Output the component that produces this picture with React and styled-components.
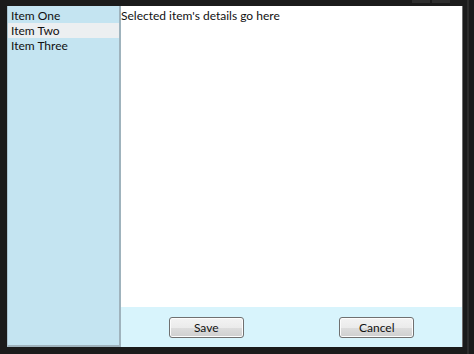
import React, { useState } from "react";
import styled, { createGlobalStyle } from "styled-components";

const Global = createGlobalStyle`
  html, body { margin: 0; padding: 0; background: #1b1b1b; }
  body { width: 474px; height: 354px; overflow: hidden; font-family: Lato, "Open Sans", sans-serif; }
`;

const Frame = styled.div`
  position: relative;
  width: 474px;
  height: 354px;
  box-sizing: border-box;
  padding: 6px 11px 7px 7px;
  background: #1b1b1b;
`;

const TitleButtons = styled.div`
  position: absolute;
  top: 0;
  right: 24px;
  display: flex;
  gap: 2px;
`;

const TitleButton = styled.div`
  width: 18px;
  height: 3px;
  background: #2e2e2e;
`;

const EdgeLine = styled.div`
  position: absolute;
  top: 0;
  bottom: 0;
  right: 5px;
  width: 2px;
  background: #2c2c2c;
`;

const Window = styled.div`
  display: grid;
  grid-template-columns: 114px 1fr;
  height: 100%;
  border-right: 1px solid #6d6d6d;
`;

const List = styled.ul`
  margin: 0;
  padding: 2px 0 0;
  list-style: none;
  background: #c4e4f1;
  border-right: 2px solid #9fb3bd;
  border-bottom: 2px solid #9fb3bd;
  border-left: 1px solid #a9c3cf;
`;

const ListItem = styled.li`
  height: 15px;
  line-height: 15px;
  padding-left: 3px;
  font-size: 12px;
  color: #111;
  background: ${(p) => (p.$selected ? "#eceff1" : "transparent")};
  cursor: default;
  white-space: nowrap;
`;

const Detail = styled.div`
  display: flex;
  flex-direction: column;
  min-width: 0;
`;

const DetailBody = styled.div`
  flex: 1;
  background: #ffffff;
  font-size: 12px;
  line-height: 15px;
  padding: 2px 0 0 0;
  color: #111;
`;

const ButtonBar = styled.div`
  height: 40px;
  display: grid;
  grid-template-columns: 1fr 1fr;
  align-items: center;
  justify-items: center;
  background: #d8f4fc;
`;

const Button = styled.button`
  width: 75px;
  height: 21px;
  padding: 0;
  font-family: Lato, "Open Sans", sans-serif;
  font-size: 12px;
  line-height: 15px;
  color: #111;
  border: 1px solid #707070;
  border-radius: 3px;
  background: linear-gradient(#f3f3f3 0%, #ebebeb 50%, #dddddd 51%, #cfcfcf 100%);
  box-shadow: inset 0 0 0 1px #fcfcfc;
`;

const items = ["Item One", "Item Two", "Item Three"];

export default function App() {
  const [selected, setSelected] = useState(1);
  return (
    <>
      <Global />
      <Frame>
        <TitleButtons>
          <TitleButton />
          <TitleButton />
        </TitleButtons>
        <EdgeLine />
        <Window>
          <List>
            {items.map((it, i) => (
              <ListItem key={it} $selected={i === selected} onClick={() => setSelected(i)}>
                {it}
              </ListItem>
            ))}
          </List>
          <Detail>
            <DetailBody>Selected item's details go here</DetailBody>
            <ButtonBar>
              <Button>Save</Button>
              <Button>Cancel</Button>
            </ButtonBar>
          </Detail>
        </Window>
      </Frame>
    </>
  );
}
